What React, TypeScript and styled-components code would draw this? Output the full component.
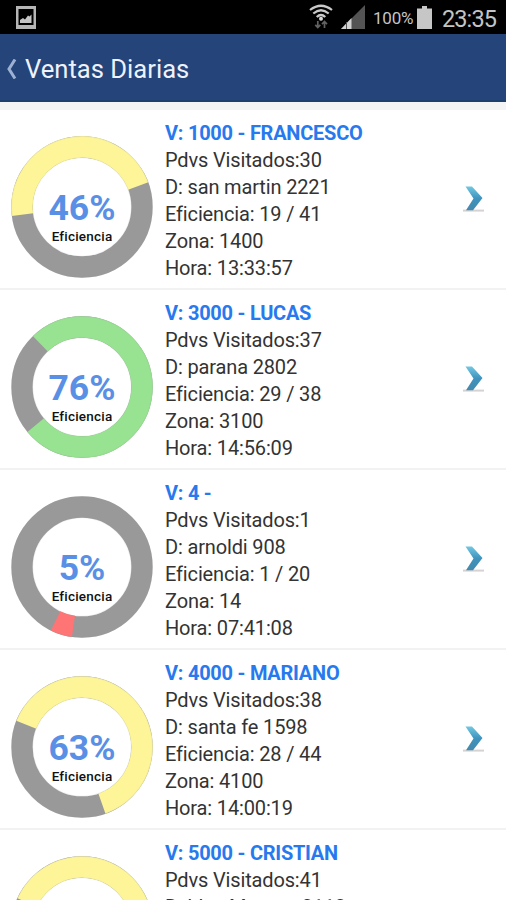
import React from "react";
import styled, { createGlobalStyle } from "styled-components";

const GlobalStyle = createGlobalStyle`
  html, body { margin: 0; background: #fff; overflow: hidden; }
  * { box-sizing: border-box; }
`;

const Screen = styled.div`
  display: flex;
  flex-direction: column;
  width: 506px;
  height: 900px;
  overflow: hidden;
  background: #fff;
  font-family: Roboto, "Liberation Sans", sans-serif;
`;

const StatusBar = styled.header`
  display: flex;
  flex: none;
  align-items: center;
  justify-content: space-between;
  height: 34px;
  padding: 0 11px 0 16px;
  background: #000;
  color: #c4c4c4;
`;

const StatusGroup = styled.div`
  display: flex;
  align-items: center;
`;

const BatteryLevel = styled.span`
  width: 41px;
  margin: 2px 3px 0 8px;
  font-size: 17px;
  line-height: 20px;
  letter-spacing: -0.2px;
  white-space: nowrap;
`;

const Clock = styled.span`
  margin: 3px 0 0 10px;
  width: 53px;
  font-size: 23.5px;
  line-height: 28px;
  letter-spacing: -0.9px;
  white-space: nowrap;
`;

const TitleBar = styled.div`
  display: flex;
  flex: none;
  align-items: center;
  gap: 8px;
  height: 68px;
  padding: 3px 0 0 6px;
  background: #24447a;
  border-bottom: 2px solid #1d416f;
`;

const Title = styled.h1`
  margin: 0;
  color: #eef2fb;
  font-size: 25.6px;
  font-weight: 400;
  line-height: 32px;
`;

const List = styled.main`
  flex: none;
  border-top: 8px solid #f5f4f5;
`;

const Row = styled.article`
  display: flex;
  align-items: flex-start;
  height: 180px;
  padding: 9px 20px 0 11px;
  border-bottom: 2px solid #f2f2f2;
`;

const Gauge = styled.div`
  display: grid;
  width: 142px;
  height: 142px;
  margin-top: 16.5px;
  & > * { grid-area: 1 / 1; }
`;

const GaugeLabel = styled.div`
  display: flex;
  flex-direction: column;
  align-items: center;
  padding-top: 54.5px;
`;

const Percent = styled.strong`
  color: #5a8fe6;
  font-size: 35.5px;
  font-weight: 700;
  line-height: 37px;
`;

const Caption = styled.span`
  color: #111;
  font-size: 13.5px;
  font-weight: 500;
  line-height: 18px;
  letter-spacing: 0.2px;
`;

const Details = styled.div`
  flex: 1;
  margin-left: 12px;
  padding-top: 0.5px;
  color: #333;
  font-size: 20px;
  line-height: 27.2px;
  letter-spacing: -0.15px;
  white-space: nowrap;
`;

const Seller = styled.h2`
  margin: 0;
  color: #2879ee;
  font-size: 20px;
  font-weight: 700;
  line-height: 27.2px;
  letter-spacing: -0.25px;
`;

const Line = styled.div`
  height: 27.2px;
`;

const Arrow = styled.svg`
  margin-top: 65.5px;
`;

type Sale = {
  seller: string;
  visits: number;
  address: string;
  efficiency: string;
  zone: string;
  time: string;
  percent: number;
  start: number;
  end: number;
  color: string;
};

const YELLOW = "#fdf598";

const sales: Sale[] = [
  { seller: "1000 - FRANCESCO", visits: 30, address: "san martin 2221", efficiency: "19 / 41", zone: "1400", time: "13:33:57", percent: 46, start: 262.7, end: 429.5, color: YELLOW },
  { seller: "3000 - LUCAS", visits: 37, address: "parana 2802", efficiency: "29 / 38", zone: "3100", time: "14:56:09", percent: 76, start: 316, end: 590.5, color: "#97e391" },
  { seller: "4 -", visits: 1, address: "arnoldi 908", efficiency: "1 / 20", zone: "14", time: "07:41:08", percent: 5, start: 188.2, end: 206.2, color: "#ff7474" },
  { seller: "4000 - MARIANO", visits: 38, address: "santa fe 1598", efficiency: "28 / 44", zone: "4100", time: "14:00:19", percent: 63, start: 291.8, end: 520.6, color: YELLOW },
];

const lastSale = { seller: "5000 - CRISTIAN", visits: 41, address: "blas Moreno 2113", start: 294, end: 517, color: YELLOW };

const point = (deg: number, r: number) => {
  const a = (deg * Math.PI) / 180;
  return `${71 + r * Math.sin(a)} ${71 - r * Math.cos(a)}`;
};

function Donut({ start, end, color }: Pick<Sale, "start" | "end" | "color">) {
  const large = end - start > 180 ? 1 : 0;
  return (
    <svg width="142" height="142" viewBox="0 0 142 142">
      <circle cx="71" cy="71" r="60" fill="none" stroke="#999" strokeWidth="21.3" />
      <path d={`M${point(start, 60)} A60 60 0 ${large} 1 ${point(end, 60)}`} fill="none" stroke={color} strokeWidth="21.5" />
      <circle cx="71" cy="71" r="70.5" fill="none" stroke="#999" strokeOpacity=".25" strokeWidth=".6" />
      <circle cx="71" cy="71" r="49.4" fill="none" stroke="#999" strokeOpacity=".25" strokeWidth=".6" />
    </svg>
  );
}

function RowArrow() {
  return (
    <Arrow width="24" height="28" viewBox="0 0 24 28">
      <defs>
        <linearGradient id="arrow" x1="0" y1="0" x2="0" y2="1">
          <stop offset="0" stopColor="#72c8e2" />
          <stop offset="0.5" stopColor="#3f93bd" />
          <stop offset="1" stopColor="#4489ac" />
        </linearGradient>
      </defs>
      <path d="M1 25.6h21" stroke="#d6d2d2" strokeWidth="2" />
      <path d="M3.5 1.5h6.5L20.5 13 11 25.2H4L11.5 13.5Z" fill="url(#arrow)" />
    </Arrow>
  );
}

function PictureIcon() {
  return (
    <svg width="20" height="23" viewBox="0 0 20 23">
      <path fillRule="evenodd" d="M0 0h20v23H0ZM2.5 3v16h15V3Z" fill="#b5b5b5" />
      <path d="M4 17v-3l3-2 2 1.5 3-4 1.5 1 2-2V17Z" fill="#c5c5c5" />
    </svg>
  );
}

function WifiIcon() {
  return (
    <svg width="24" height="26" viewBox="0 0 24 26">
      <g fill="none" stroke="#c9c9c9" strokeWidth="2.2">
        <path d="M1 6Q12-2.5 23 6" />
        <path d="M4.3 9.5Q12 3 19.7 9.5" />
        <path d="M7.7 13Q12 9 16.3 13" />
      </g>
      <circle cx="12" cy="14.8" r="2" fill="#d8d8d8" />
      <g fill="none" stroke="#626262" strokeWidth="1.7">
        <path d="M8.8 17v6.5M6.3 20.8l2.5 2.7 2.5-2.7" />
        <path d="M15.5 24v-6.5M13 20.2l2.5-2.7 2.5 2.7" />
      </g>
    </svg>
  );
}

const Signal = styled.svg`
  margin-left: 8px;
`;

function SignalIcon() {
  return (
    <Signal width="24" height="24" viewBox="0 0 24 24">
      <path d="M0 24 24 0v24Z" fill="#545454" />
      <path d="M0 24 10.5 13v11Z" fill="#d2d2d2" />
      <path d="M5.5 17v7" stroke="#555" />
    </Signal>
  );
}

function BatteryIcon() {
  return (
    <svg width="15" height="23" viewBox="0 0 15 23">
      <path d="M5 0h5v2.5h5V23H0V2.5h5Z" fill="#c6c6c6" />
    </svg>
  );
}

export default function App() {
  return (
    <Screen>
      <GlobalStyle />
      <StatusBar>
        <PictureIcon />
        <StatusGroup>
          <WifiIcon />
          <SignalIcon />
          <BatteryLevel>100%</BatteryLevel>
          <BatteryIcon />
          <Clock>23:35</Clock>
        </StatusGroup>
      </StatusBar>
      <TitleBar>
        <svg width="11" height="20" viewBox="0 0 11 20">
          <path d="M9 .5 3 10l6 9.5" fill="none" stroke="#9db2d2" strokeWidth="3" />
        </svg>
        <Title>Ventas Diarias</Title>
      </TitleBar>
      <List>
        {sales.map((sale) => (
          <Row key={sale.seller}>
            <Gauge>
              <Donut start={sale.start} end={sale.end} color={sale.color} />
              <GaugeLabel>
                <Percent>{sale.percent}%</Percent>
                <Caption>Eficiencia</Caption>
              </GaugeLabel>
            </Gauge>
            <Details>
              <Seller>V: {sale.seller}</Seller>
              <Line>Pdvs Visitados:{sale.visits}</Line>
              <Line>D: {sale.address}</Line>
              <Line>Eficiencia: {sale.efficiency}</Line>
              <Line>Zona: {sale.zone}</Line>
              <Line>Hora: {sale.time}</Line>
            </Details>
            <RowArrow />
          </Row>
        ))}
        <Row>
          <Gauge>
            <Donut start={lastSale.start} end={lastSale.end} color={lastSale.color} />
          </Gauge>
          <Details>
            <Seller>V: {lastSale.seller}</Seller>
            <Line>Pdvs Visitados:{lastSale.visits}</Line>
            <Line>D: {lastSale.address}</Line>
          </Details>
        </Row>
      </List>
    </Screen>
  );
}
